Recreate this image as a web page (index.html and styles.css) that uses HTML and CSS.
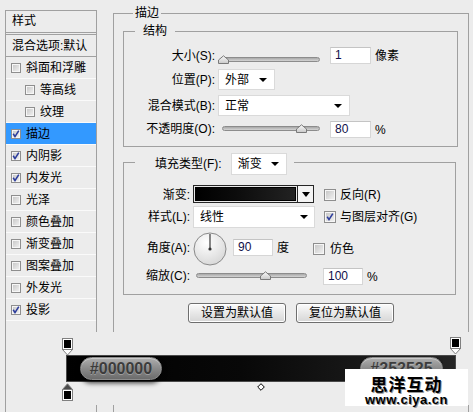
FILE: index.html
```html
<!DOCTYPE html>
<html lang="zh-CN">
<head>
<meta charset="utf-8">
<title>图层样式 - 描边</title>
<link rel="stylesheet" href="styles.css">
</head>
<body>
<div class="dialog">
  <div class="styles">
    <div class="styles-head">样式</div>
    <div class="styles-row blend">混合选项:默认</div>
    <div class="styles-row"><span class="cb"></span>斜面和浮雕</div>
    <div class="styles-row sub"><span class="cb"></span>等高线</div>
    <div class="styles-row sub"><span class="cb"></span>纹理</div>
    <div class="styles-row active"><span class="cb"><svg class="tick" width="10" height="10" viewBox="0 0 10 10"><path d="M2.2 4.8 L4 7.6 L7.8 1.6" fill="none" stroke="#2c3c9c" stroke-width="1.6"/></svg></span>描边</div>
    <div class="styles-row"><span class="cb"><svg class="tick" width="10" height="10" viewBox="0 0 10 10"><path d="M2.2 4.8 L4 7.6 L7.8 1.6" fill="none" stroke="#2c3c9c" stroke-width="1.6"/></svg></span>内阴影</div>
    <div class="styles-row"><span class="cb"><svg class="tick" width="10" height="10" viewBox="0 0 10 10"><path d="M2.2 4.8 L4 7.6 L7.8 1.6" fill="none" stroke="#2c3c9c" stroke-width="1.6"/></svg></span>内发光</div>
    <div class="styles-row"><span class="cb"></span>光泽</div>
    <div class="styles-row"><span class="cb"></span>颜色叠加</div>
    <div class="styles-row"><span class="cb"></span>渐变叠加</div>
    <div class="styles-row"><span class="cb"></span>图案叠加</div>
    <div class="styles-row"><span class="cb"></span>外发光</div>
    <div class="styles-row"><span class="cb"><svg class="tick" width="10" height="10" viewBox="0 0 10 10"><path d="M2.2 4.8 L4 7.6 L7.8 1.6" fill="none" stroke="#2c3c9c" stroke-width="1.6"/></svg></span>投影</div>
  </div>

  <div class="main">
    <fieldset class="group outer">
      <legend class="lg-outer">描边</legend>

      <fieldset class="group struct">
        <legend class="lg-struct">结构</legend>
        <div class="row r1">
          <span class="lbl">大小(S):</span>
          <div class="slider s-size"><svg class="thumb" style="left:-5px" width="11" height="9" viewBox="0 0 11 9"><defs><linearGradient id="tg1" x1="0" y1="0" x2="0" y2="1"><stop offset="0" stop-color="#fafafa"/><stop offset="1" stop-color="#c9c9c9"/></linearGradient></defs><path d="M0.5 8.5 L0.5 5 L5.5 0.8 L10.5 5 L10.5 8.5 Z" fill="url(#tg1)" stroke="#7a7a7a"/></svg></div>
          <div class="input in-size">1</div>
          <span class="unit">像素</span>
        </div>
        <div class="row r2">
          <span class="lbl">位置(P):</span>
          <div class="select sel-pos"><span>外部</span><i class="arrow"></i></div>
        </div>
        <div class="row r3">
          <span class="lbl">混合模式(B):</span>
          <div class="select sel-mode"><span>正常</span><i class="arrow"></i></div>
        </div>
        <div class="row r4">
          <span class="lbl">不透明度(O):</span>
          <div class="slider s-opacity"><svg class="thumb" style="left:73px" width="11" height="9" viewBox="0 0 11 9"><defs><linearGradient id="tg2" x1="0" y1="0" x2="0" y2="1"><stop offset="0" stop-color="#fafafa"/><stop offset="1" stop-color="#c9c9c9"/></linearGradient></defs><path d="M0.5 8.5 L0.5 5 L5.5 0.8 L10.5 5 L10.5 8.5 Z" fill="url(#tg2)" stroke="#7a7a7a"/></svg></div>
          <div class="input in-op">80</div>
          <span class="unit">%</span>
        </div>
      </fieldset>

      <fieldset class="group fill">
        <legend class="lg-fill"><span>填充类型(F):</span><div class="select sel-fill"><span>渐变</span><i class="arrow"></i></div></legend>
        <div class="row f1">
          <span class="lbl">渐变:</span>
          <div class="swatch"><div class="swatch-inner"></div></div>
          <div class="swatch-btn"><i class="arrow"></i></div>
          <span class="ck ck-rev"></span>
          <span class="ck-text t-rev">反向(R)</span>
        </div>
        <div class="row f2">
          <span class="lbl">样式(L):</span>
          <div class="select sel-style"><span>线性</span><i class="arrow"></i></div>
          <span class="ck ck-align"><svg width="10" height="10" viewBox="0 0 10 10"><path d="M2.2 4.8 L4 7.6 L7.8 1.6" fill="none" stroke="#2c3c9c" stroke-width="1.6"/></svg></span>
          <span class="ck-text t-align">与图层对齐(G)</span>
        </div>
        <div class="row f3">
          <span class="lbl">角度(A):</span>
          <svg class="dial" width="34" height="34" viewBox="0 0 34 34"><defs><radialGradient id="dg" cx="0.4" cy="0.3" r="0.8"><stop offset="0" stop-color="#ffffff"/><stop offset="1" stop-color="#d4d4d4"/></radialGradient></defs><circle cx="17" cy="17" r="16" fill="url(#dg)" stroke="#8a8a8a"/><line x1="17" y1="17" x2="17" y2="2" stroke="#555" stroke-width="1.4"/><circle cx="17" cy="17" r="1.6" fill="#333"/></svg>
          <div class="input in-angle">90</div>
          <span class="unit u-deg">度</span>
          <span class="ck ck-dither"></span>
          <span class="ck-text t-dither">仿色</span>
        </div>
        <div class="row f4">
          <span class="lbl">缩放(C):</span>
          <div class="slider s-scale"><svg class="thumb" style="left:63px" width="11" height="9" viewBox="0 0 11 9"><defs><linearGradient id="tg3" x1="0" y1="0" x2="0" y2="1"><stop offset="0" stop-color="#fafafa"/><stop offset="1" stop-color="#c9c9c9"/></linearGradient></defs><path d="M0.5 8.5 L0.5 5 L5.5 0.8 L10.5 5 L10.5 8.5 Z" fill="url(#tg3)" stroke="#7a7a7a"/></svg></div>
          <div class="input in-scale">100</div>
          <span class="unit">%</span>
        </div>
      </fieldset>

      <div class="buttons">
        <div class="btn">设置为默认值</div>
        <div class="btn">复位为默认值</div>
      </div>
    </fieldset>
  </div>

  <div class="grad-overlay">
    <svg class="stop stop-tl" width="11" height="18" viewBox="0 0 11 18"><path d="M0.5 11.5 L5.5 17 L10.5 11.5 Z" fill="#fff" stroke="#808080"/><rect x="0.5" y="0.5" width="10" height="11" fill="#fff" stroke="#808080"/><rect x="2" y="2" width="7" height="8" fill="#000"/></svg>
    <svg class="stop stop-tr" width="11" height="18" viewBox="0 0 11 18"><path d="M0.5 11.5 L5.5 17 L10.5 11.5 Z" fill="#fff" stroke="#808080"/><rect x="0.5" y="0.5" width="10" height="11" fill="#fff" stroke="#808080"/><rect x="2" y="2" width="7" height="8" fill="#000"/></svg>
    <div class="grad-bar"></div>
    <div class="pill pill-a">#000000</div>
    <div class="pill-clip"><div class="pill pill-b">#252525</div></div>
    <svg class="stop stop-bl" width="11" height="18" viewBox="0 0 11 18"><path d="M0.5 6.5 L5.5 0.8 L10.5 6.5 Z" fill="#4a4a4a" stroke="#777"/><rect x="0.5" y="6.5" width="10" height="11" fill="#fff" stroke="#808080"/><rect x="2" y="8" width="7" height="8" fill="#000"/></svg>
    <svg class="mid" width="8" height="8" viewBox="0 0 8 8"><path d="M4 0.7 L7.3 4 L4 7.3 L0.7 4 Z" fill="#fff" stroke="#000"/></svg>
  </div>

  <div class="watermark">
    <div class="wm-title">思洋互动</div>
    <div class="wm-url">www.ciya.cn</div>
  </div>
</div>
</body>
</html>
```

FILE: styles.css
```css
* { box-sizing: border-box; }

html, body {
  margin: 0;
  padding: 0;
  background: #ececec;
}

body {
  font: 12px/14px "Liberation Sans", "Noto Sans CJK SC", sans-serif;
  color: #000;
}

.dialog {
  position: relative;
  display: flex;
  width: 473px;
  height: 412px;
  padding-left: 5px;
  overflow: hidden;
}

/* ---------- left style list ---------- */
.styles {
  margin-top: 10px;
  width: 92px;
  height: 402px;
  border: 1px solid #a0a0a0;
  border-bottom: none;
  flex: none;
}

.styles-head {
  height: 24px;
  line-height: 21px;
  padding-left: 6px;
  border-bottom: 3px double #a0a0a0;
}

.styles-row {
  display: flex;
  align-items: center;
  height: 22px;
  padding-left: 5px;
  border-bottom: 1px solid #fafafa;
  white-space: nowrap;
}

.styles-row.blend {
  padding-left: 6px;
  border-bottom-color: #a0a0a0;
}

.styles-row.sub { padding-left: 19px; }

.styles-row.active { background: #3399ff; }

.cb {
  width: 10px;
  height: 10px;
  margin-right: 5px;
  border: 1px solid #8e8e8e;
  background: linear-gradient(135deg, #c4c4c4, #f4f4f4);
  box-shadow: inset 0 0 0 1px #f6f6f6;
  position: relative;
  flex: none;
}

.cb .tick {
  position: absolute;
  left: -1px;
  top: -1px;
}

/* ---------- right panel ---------- */
.main {
  flex: 1;
  margin: 6px 4px 0 16px;
  min-width: 0;
}

.group {
  margin: 0;
  padding: 0;
  border: 1px solid #a0a0a0;
  min-inline-size: 0;
}

.group > legend {
  line-height: 14px;
  font-size: 12px;
}

.outer {
  height: 406px;
  border-bottom: none;
}

.lg-outer {
  margin-left: 19px;
  padding: 0 2px;
}

.struct {
  margin: 4px 10px 0 9px;
  padding: 7px 0 6px 0;
}

.lg-struct {
  margin-left: 11px;
  padding: 0 8px;
}

.row {
  display: flex;
  align-items: flex-start;
  white-space: nowrap;
}

.struct .lbl {
  width: 91px;
  margin-right: 3px;
  text-align: right;
}

.r1 { height: 24px; }
.r2 { height: 25px; }
.r3 { height: 24px; }
.r4 { height: 22px; }

.r1 .lbl { margin-top: 4px; }
.r2 .lbl { margin-top: 4px; }
.r3 .lbl { margin-top: 5px; }
.r4 .lbl { margin-top: 4px; }

.slider {
  position: relative;
  height: 5px;
  border: 1px solid #8c8c8c;
  border-radius: 3px;
  background: linear-gradient(#a8a8a8, #d4d4d4);
  flex: none;
}

.slider .thumb {
  position: absolute;
  top: -3px;
}

.s-size { width: 98px; margin: 12px 0 0 4px; }
.s-opacity { width: 98px; margin: 8px 0 0 4px; }
.s-scale { width: 111px; margin: 7px 0 0 3px; }

.input {
  height: 17px;
  width: 41px;
  background: #fff;
  border: 1px solid #d6d6d6;
  border-top-color: #c4c4c4;
  padding-left: 4px;
  line-height: 15px;
  color: #10104a;
  flex: none;
}

.in-size { margin: 2px 0 0 10px; }
.in-op { margin: 3px 0 0 10px; }
.in-angle { width: 40px; margin: 11px 0 0 6px; }
.in-scale { width: 40px; margin: 2px 0 0 16px; }

.unit { margin-left: 4px; }
.r1 .unit { margin-top: 4px; }
.r4 .unit { margin-top: 5px; }

.select {
  display: flex;
  align-items: center;
  justify-content: space-between;
  height: 21px;
  background: #fff;
  border: 1px solid #dadada;
  padding: 0 7px 0 6px;
  flex: none;
}

.arrow {
  display: block;
  width: 0;
  height: 0;
  border-left: 4px solid transparent;
  border-right: 4px solid transparent;
  border-top: 4px solid #000;
}

.sel-pos { width: 57px; }
.sel-mode { width: 132px; margin-top: 1px; }

/* ---------- fill group ---------- */
.fill {
  margin: 2px 12px 0 9px;
  padding: 10px 0 6px 0;
}

.lg-fill {
  display: flex;
  align-items: center;
  margin-left: 11px;
  padding: 4px 7px 0 20px;
}

.sel-fill {
  width: 56px;
  height: 22px;
  margin-left: 9px;
}

.fill .lbl {
  width: 66px;
  margin-right: 3px;
  text-align: right;
}

.f1 { height: 20px; }
.f2 { height: 23px; }
.f3 { height: 38px; }
.f4 { height: 22px; }

.f1 .lbl { margin-top: 3px; }
.f2 .lbl { margin-top: 5px; }
.f3 .lbl { margin-top: 13px; }
.f4 .lbl { margin-top: 3px; }

.swatch {
  width: 105px;
  height: 18px;
  border: 1px solid #262626;
  background: #e8e8e8;
  padding: 1px;
  flex: none;
}

.swatch-inner {
  height: 100%;
  border: 1px solid #000;
  background: linear-gradient(to right, #000 0%, #0c0c0c 40%, #222 100%);
}

.swatch-btn {
  display: flex;
  align-items: center;
  justify-content: center;
  width: 16px;
  height: 18px;
  border: 1px solid #262626;
  border-left: none;
  background: #f4f4f4;
  flex: none;
}

.swatch-btn .arrow {
  border-left-width: 4.5px;
  border-right-width: 4.5px;
  border-top-width: 5px;
}

.sel-style { width: 122px; height: 22px; margin-top: 1px; padding-right: 6px; }

.ck {
  position: relative;
  width: 12px;
  height: 12px;
  border: 1px solid #8e8e8e;
  background: linear-gradient(135deg, #c4c4c4, #f4f4f4);
  box-shadow: inset 0 0 0 1px #f6f6f6;
  flex: none;
}

.ck svg { position: absolute; left: 0; top: 0; }

.ck-rev { margin: 4px 0 0 10px; }
.ck-align { margin: 6px 0 0 9px; }
.ck-dither { margin: 15px 0 0 24px; }

.ck-text { margin-left: 4px; }
.t-rev { margin-top: 3px; }
.t-align { margin-top: 5px; }
.t-dither { margin: 14px 0 0 5px; }

.dial { margin-top: 4px; flex: none; }

.u-deg { margin-top: 13px; }
.f4 .unit { margin-top: 4px; }

/* ---------- buttons ---------- */
.buttons {
  display: flex;
  justify-content: center;
  gap: 10px;
  margin-top: 8px;
}

.btn {
  width: 98px;
  height: 20px;
  line-height: 18px;
  text-align: center;
  border: 1px solid #6e6e6e;
  border-radius: 3px;
  background: linear-gradient(#fbfbfb, #e6e6e6 55%, #d6d6d6);
  box-shadow: inset 0 0 0 1px #fff;
}

/* ---------- gradient editor overlay ---------- */
.grad-overlay {
  position: absolute;
  left: 40px;
  top: 332px;
  right: 0;
  height: 73px;
  background: #ececec;
}

.stop { position: absolute; }
.stop-tl { left: 22px; top: 6px; }
.stop-tr { left: 410px; top: 5px; }
.stop-bl { left: 22px; top: 51px; }

.grad-bar {
  position: absolute;
  left: 26px;
  top: 23px;
  width: 390px;
  height: 27px;
  border: 1px solid #4a4a4a;
  background: linear-gradient(to right, #000 0%, #080808 45%, #252525 100%);
}

.pill {
  position: absolute;
  top: 25px;
  height: 23px;
  border-radius: 12px;
  border: 1px solid #8c8c8c;
  background: linear-gradient(#aeaeae, #8a8a8a 50%, #6c6c6c);
  box-shadow: 0 3px 5px rgba(0, 0, 0, 0.75), inset 0 1px 0 rgba(255, 255, 255, 0.35);
  font: bold 16px/21px "Liberation Sans", sans-serif;
  color: #3c3c3c;
  text-shadow: 0 1px 0 rgba(255, 255, 255, 0.3);
  text-align: center;
}

.pill-a { left: 40px; width: 82px; }

/* the right pill is partly hidden behind the watermark */
.pill-clip {
  position: absolute;
  left: 320px;
  top: 25px;
  width: 83px;
  height: 12px;
  overflow: hidden;
}

.pill-clip .pill-b { left: 0; top: 0; width: 83px; }

.mid { position: absolute; left: 217px; top: 51px; }

/* ---------- watermark ---------- */
.watermark {
  position: absolute;
  left: 345px;
  top: 369px;
  width: 123px;
  height: 37px;
  background: #fff;
  text-align: center;
}

.wm-title {
  margin-top: 7px;
  font: bold 17px/16px "Noto Sans CJK SC", sans-serif;
  letter-spacing: 1px;
  color: #000;
  text-shadow: 1px 1px 0 #9a9a9a;
}

.wm-url {
  margin-top: 2px;
  font: bold 13px/11px "Liberation Sans", sans-serif;
  letter-spacing: 0.5px;
  color: #000;
  text-shadow: 1px 1px 0 #9a9a9a;
}
```
